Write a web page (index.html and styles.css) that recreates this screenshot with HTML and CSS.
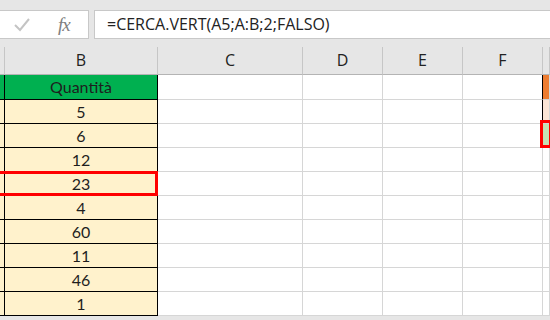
FILE: index.html
```html
<!DOCTYPE html>
<html lang="it">
<head>
    <meta charset="UTF-8">
    <title>CERCA.VERT</title>
    <link rel="stylesheet" href="styles.css">
</head>
<body>
<div class="formula-bar">
    <div class="tools">
        <svg class="check" width="16" height="14" viewBox="0 0 16 14">
            <polyline points="1,7 6,12 15,1" fill="none" stroke="#c4c4c4" stroke-width="2"/>
        </svg>
        <span class="fx">fx</span>
    </div>
    <div class="formula">=CERCA.VERT(A5;A:B;2;FALSO)</div>
</div>

<div class="sheet">
    <div class="head"></div><div class="head">B</div><div class="head">C</div><div class="head">D</div><div class="head">E</div><div class="head">F</div><div class="head"></div>

    <div class="cell t green"></div><div class="cell t green">Quantità</div><div class="cell"></div><div class="cell"></div><div class="cell"></div><div class="cell edge"></div><div class="cell orange"></div>
    <div class="cell t"></div><div class="cell t">5</div><div class="cell"></div><div class="cell"></div><div class="cell"></div><div class="cell edge"></div><div class="cell peach"></div>
    <div class="cell t"></div><div class="cell t">6</div><div class="cell"></div><div class="cell"></div><div class="cell"></div><div class="cell"></div><div class="cell lime sel-result"></div>
    <div class="cell t"></div><div class="cell t">12</div><div class="cell"></div><div class="cell"></div><div class="cell"></div><div class="cell"></div><div class="cell"></div>
    <div class="cell t"></div><div class="cell t sel-value">23</div><div class="cell"></div><div class="cell"></div><div class="cell"></div><div class="cell"></div><div class="cell"></div>
    <div class="cell t"></div><div class="cell t">4</div><div class="cell"></div><div class="cell"></div><div class="cell"></div><div class="cell"></div><div class="cell"></div>
    <div class="cell t"></div><div class="cell t">60</div><div class="cell"></div><div class="cell"></div><div class="cell"></div><div class="cell"></div><div class="cell"></div>
    <div class="cell t"></div><div class="cell t">11</div><div class="cell"></div><div class="cell"></div><div class="cell"></div><div class="cell"></div><div class="cell"></div>
    <div class="cell t"></div><div class="cell t">46</div><div class="cell"></div><div class="cell"></div><div class="cell"></div><div class="cell"></div><div class="cell"></div>
    <div class="cell t"></div><div class="cell t">1</div><div class="cell"></div><div class="cell"></div><div class="cell"></div><div class="cell"></div><div class="cell"></div>
</div>
</body>
</html>
```

FILE: styles.css
```css
body {
    margin: 0;
    background: #e6e6e6;
    font-family: Lato, "Open Sans", sans-serif;
    color: #1e1e1e;
    overflow: hidden;
}

.formula-bar {
    display: flex;
    gap: 5px;
    padding-top: 10px;
}
.tools {
    width: 89px;
    height: 29px;
    box-sizing: border-box;
    background: white;
    border: 1px solid #c8c8c8;
    border-left: none;
    display: flex;
    align-items: center;
}
.check {
    margin-left: 14px;
}
.fx {
    margin-left: 28px;
    font-family: "Liberation Serif", serif;
    font-style: italic;
    font-size: 19px;
    color: #808080;
    letter-spacing: -1px;
}
.formula {
    flex: 1;
    height: 29px;
    box-sizing: border-box;
    background: white;
    border: 1px solid #c8c8c8;
    border-right: none;
    padding-left: 12px;
    font-family: "Open Sans", sans-serif;
    font-size: 16px;
    line-height: 27px;
    color: #222;
}

.sheet {
    margin-top: 8px;
    display: grid;
    grid-template-columns: 5px 153px 145px 80px 80px 80px 1fr;
    grid-template-rows: 28px 25px repeat(9, 24px);
    background: white;
}
.head {
    background: #e6e6e6;
    border-right: 1px solid #c6c6c6;
    border-bottom: 1px solid #b4b4b4;
    font-family: "Open Sans", sans-serif;
    font-size: 16px;
    color: #222;
    text-align: center;
    line-height: 27px;
}
.cell {
    border-right: 1px solid #d6d6d6;
    border-bottom: 1px solid #d6d6d6;
    font-size: 16px;
    text-align: center;
    line-height: 23px;
}
.cell.t {
    background: #fff2cc;
    border-right-color: #000;
    border-bottom-color: #000;
}
.cell.green {
    background: #00b050;
}
.cell.edge {
    border-right-color: #000;
}
.orange {
    background: #ed7d31;
}
.peach {
    background: #fbe5d6;
}
.lime {
    background: #c6e0b4;
}

/* red frames drawn over the cells */
.sel-value,
.sel-result {
    position: relative;
}
.sel-value::after,
.sel-result::after {
    content: "";
    position: absolute;
    border: 3px solid #ff0000;
}
.sel-value::after {
    top: -1px;
    bottom: -1px;
    left: -12px;
    right: -1px;
}
.sel-result::after {
    top: -4px;
    bottom: -1px;
    left: -3px;
    right: -3px;
}
```
